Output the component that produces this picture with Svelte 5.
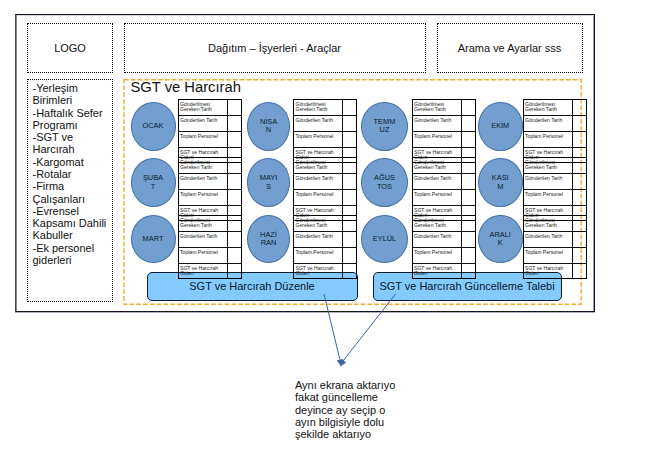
<script>
  const menu = ['-Yerleşim', 'Birimleri', '-Haftalık Sefer', 'Programı', '-SGT ve', 'Harcırah', '-Kargomat', '-Rotalar', '-Firma', 'Çalışanları', '-Evrensel', 'Kapsamı Dahili', 'Kabuller', '-Ek personel', 'giderleri'];
  const quarters = [
    { lead: 7.5, width: 45, gap: 2, months: [['OCAK'], ['ŞUBA', 'T'], ['MART']] },
    { lead: 5.5, width: 43, gap: 3, months: [['NİSA', 'N'], ['MAYI', 'S'], ['HAZİ', 'RAN']] },
    { lead: 4, width: 47, gap: 3.5, months: [['TEMM', 'UZ'], ['AĞUS', 'TOS'], ['EYLÜL']] },
    { lead: 2.5, width: 44.5, gap: 0, months: [['EKİM'], ['KASI', 'M'], ['ARALI', 'K']] }
  ];
  const fields = [['Gönderilmesi', 'Gereken Tarih'], ['Gönderilen Tarih'], ['Toplam Personel'], ['SGT ve Harcırah', 'Gideri']];
  const note = ['Aynı ekrana aktarıyo', 'fakat güncelleme', 'deyince ay seçip o', 'ayın bilgisiyle dolu', 'şekilde aktarıyo'];
</script>

<div class="page">
  <div class="frame">
    <header>
      <div class="box logo">LOGO</div>
      <div class="box nav">Dağıtım – İşyerleri - Araçlar</div>
      <div class="box search">Arama ve Ayarlar sss</div>
    </header>
    <div class="body">
      <nav class="box side">
        {#each menu as line}<div>{line}</div>{/each}
      </nav>
      <main>
        <svg class="outline" width="460" height="227"><rect x="1" y="0.7" width="457.2" height="224.6" /></svg>
        <h1>SGT ve Harcırah</h1>
        <div class="quarters">
          {#each quarters as q}
            <section style="padding-left:{q.lead}px; gap:{q.gap}px">
              <div class="circles" style="width:{q.width}px">
                {#each q.months as m}
                  <div class="circle">{#each m as part}<span>{part}</span>{/each}</div>
                {/each}
              </div>
              <div class="tables">
                {#each q.months as m}
                  <div class="table">
                    {#each fields as f}
                      <div class="row">
                        <div class="label">{#each f as part}<span>{part}</span>{/each}</div>
                        <div class="value"></div>
                      </div>
                    {/each}
                  </div>
                {/each}
              </div>
            </section>
          {/each}
        </div>
        <div class="actions">
          <button class="edit">SGT ve Harcırah Düzenle</button>
          <button class="request">SGT ve Harcırah Güncelleme Talebi</button>
        </div>
      </main>
    </div>
  </div>
  <div class="note">
    {#each note as line}<div>{line}</div>{/each}
  </div>
  <svg class="arrows" width="669" height="471">
    <path d="M324 294 L340 360 M395.5 294 L343 361" />
    <polygon points="337.2,360.6 342.8,359.4 341,365.8" />
    <polygon points="341.4,359.6 345.8,362.6 340.8,365.8" />
  </svg>
</div>

<style>
  :global(body) { background: #fff; }
  .page {
    position: relative;
    box-sizing: border-box;
    width: 669px;
    height: 471px;
    padding: 14px 0 0 15px;
    overflow: hidden;
    font: 10.98px/12.28px "Liberation Sans", Arial, sans-serif;
    color: #111;
    white-space: nowrap;
  }
  .frame {
    box-sizing: border-box;
    width: 580px;
    height: 298px;
    padding: 8px 11px;
    border: 1px solid #17131c;
    border-left-color: #4a444e;
    box-shadow: inset 1px 0 #8f8894, inset 0 1px #ddd6df, 0 1px #b9afbe, inset -1px 0 #a99ab0;
  }
  header { display: flex; gap: 11px; height: 50px; margin-bottom: 6px; }
  .box { box-sizing: border-box; border: 1px dotted #000; }
  header .box { display: flex; align-items: center; justify-content: center; }
  .logo, .side { width: 86px; flex: none; }
  .nav { width: 302px; padding-right: 1px; }
  .search { width: 146px; padding-right: 1px; }
  .body { display: flex; gap: 10px; }
  .side { height: 223px; padding: 2px 0 0 4.5px; }
  main { position: relative; width: 460px; height: 227px; }
  .outline { position: absolute; left: 0; top: 0; }
  .outline rect { fill: none; stroke: #efad35; stroke-width: 1.4; stroke-dasharray: 4.8 2; }
  h1 { margin: 0; padding: 0 0 0 7.5px; height: 20px; font-size: 14.75px; line-height: 17px; font-weight: 400; }
  .quarters { position: relative; z-index: 1; display: flex; height: 173px; }
  section { display: flex; flex: none; }
  .circles { display: flex; flex-direction: column; gap: 7.8px; padding-top: 3px; }
  .circle {
    box-sizing: border-box;
    display: flex;
    flex-direction: column;
    align-items: center;
    justify-content: center;
    height: 48.5px;
    border: 1px solid #4470a8;
    border-radius: 50%;
    background: #729fcf;
    color: #0c1b30;
    font-size: 7.4px;
    line-height: 8.2px;
  }
  .table {
    box-sizing: border-box;
    width: 64px;
    height: 64px;
    margin-bottom: -6px;
    border: 1px solid #000;
    display: grid;
    grid-template-rows: 15px 16px 16px 15px;
  }
  .row { display: grid; grid-template-columns: 48px 14px; }
  .row + .row { border-top: 1px solid #111; }
  .label { padding: 1.5px 0 0 1.5px; font-size: 5.1px; line-height: 5.2px; color: #222; }
  .label span { display: block; }
  .value { border-left: 1px solid #111; }
  .actions { display: flex; gap: 15px; padding-left: 24px; }
  button {
    box-sizing: border-box;
    height: 28.5px;
    padding: 0 1px 0 0;
    border: 1.4px solid #0b1c2b;
    border-radius: 5px;
    background: #83caff;
    color: #071725;
    font: inherit;
  }
  .edit { width: 211px; }
  .request { width: 189px; }
  .note { margin: 67px 0 0 280px; }
  .arrows { position: absolute; left: 0; top: 0; z-index: 2; }
  .arrows path { fill: none; stroke: #3f62a0; stroke-width: 1; }
  .arrows polygon { fill: #3f62a0; stroke: #3f62a0; stroke-width: .6; }
</style>
